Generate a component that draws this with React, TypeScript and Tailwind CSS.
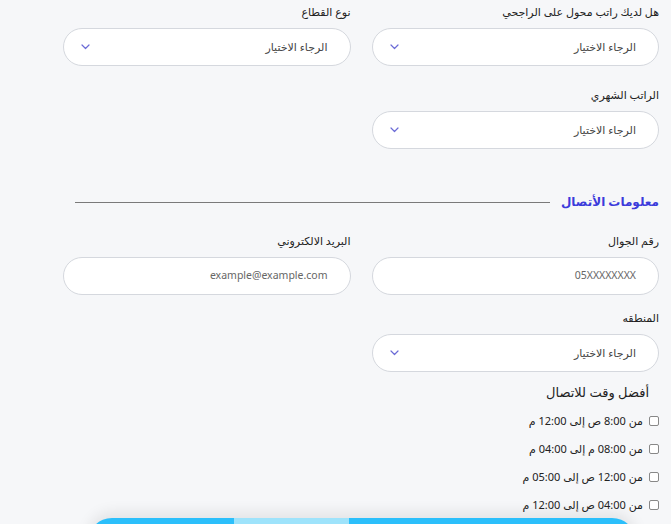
import React from 'react';

const font = { fontFamily: '"Noto Sans", "DejaVu Sans", sans-serif' };

const Chevron = () => (
  <svg width="9" height="6" viewBox="0 0 9 6" fill="none" className="text-[#6b6bd6]">
    <path d="M1 1l3.5 3.5L8 1" stroke="currentColor" strokeWidth="1.2" strokeLinecap="round" strokeLinejoin="round" />
  </svg>
);

const Label: React.FC<{ children: React.ReactNode }> = ({ children }) => (
  <div className="text-[11px] leading-[16px] text-[#222] mb-[8px] h-[16px]">{children}</div>
);

const SelectBox = () => (
  <div className="h-[38px] rounded-full bg-white border border-[#d5d8de] flex items-center justify-between pr-[22px] pl-[17px]">
    <span className="text-[11px] text-[#444]">الرجاء الاختيار</span>
    <Chevron />
  </div>
);

const InputBox: React.FC<{ placeholder: string }> = ({ placeholder }) => (
  <div className="h-[38px] rounded-full bg-white border border-[#d5d8de] flex items-center pr-[22px]">
    <span className="text-[10.5px] text-[#666]" dir="ltr">{placeholder}</span>
  </div>
);

const times = [
  'من 8:00 ص إلى 12:00 م',
  'من 08:00 م إلى 04:00 م',
  'من 12:00 ص إلى 05:00 م',
  'من 04:00 ص إلى 12:00 م',
];

export default function App() {
  return (
    <div dir="rtl" style={font} className="bg-[#f6f7f9] w-[671px] h-[524px] overflow-hidden">
      <div className="pr-[12px] pl-[63px] pt-[4px]">
        <div className="grid grid-cols-2 gap-x-[21px]">
          <div>
            <Label>هل لديك راتب محول على الراجحي</Label>
            <SelectBox />
          </div>
          <div>
            <Label>نوع القطاع</Label>
            <SelectBox />
          </div>
          <div className="mt-[21px]">
            <Label>الراتب الشهري</Label>
            <SelectBox />
          </div>
          <div />
        </div>

        <div className="flex items-center gap-[11px] mt-[43px] pl-[12px]">
          <span className="text-[12px] font-bold text-[#3b3bdb] leading-[20px]">معلومات الأتصال</span>
          <div className="flex-1 h-px bg-[#7a7a7a]" />
        </div>

        <div className="grid grid-cols-2 gap-x-[21px] mt-[21px]">
          <div>
            <Label>رقم الجوال</Label>
            <InputBox placeholder="05XXXXXXXX" />
          </div>
          <div>
            <Label>البريد الالكتروني</Label>
            <InputBox placeholder="example@example.com" />
          </div>
          <div className="mt-[15px]">
            <Label>المنطقه</Label>
            <SelectBox />
          </div>
          <div />
        </div>

        <div className="pr-[10px] mt-[10px] text-[13px] leading-[20px] text-[#222]">أفضل وقت للاتصال</div>

        <div className="mt-[10px] flex flex-col gap-[10px]">
          {times.map((t) => (
            <label key={t} className="flex items-center gap-[6px] h-[18px] text-[11px] text-[#222]">
              <span className="w-[10px] h-[10px] rounded-[2px] border border-[#888] bg-white" />
              <span>{t}</span>
            </label>
          ))}
        </div>
      </div>

      <div className="mr-[35px] mt-[4px] w-[548px] h-[40px] rounded-t-[24px] bg-[#2bbffb] shadow-[0_-6px_14px_rgba(0,0,0,0.08)] flex" dir="ltr">
        <div className="w-[146px]" />
        <div className="w-[115px] bg-[#9ee3fb]" />
      </div>
    </div>
  );
}
